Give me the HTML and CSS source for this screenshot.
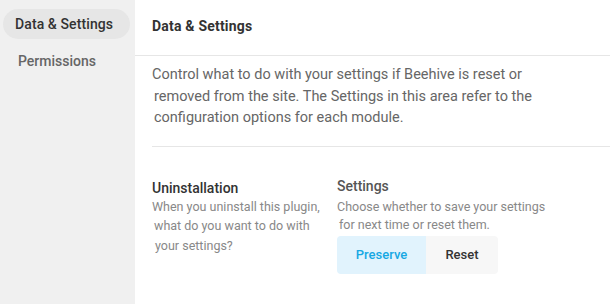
FILE: index.html
```html
<!DOCTYPE html>
<html>
<head>
<meta charset="utf-8">
<link rel="stylesheet" href="styles.css">
</head>
<body>
<div class="layout">
  <nav class="sidebar">
    <div class="nav-item active">Data &amp; Settings</div>
    <div class="nav-item">Permissions</div>
  </nav>
  <main class="content">
    <header class="box-header"><h2>Data &amp; Settings</h2></header>
    <div class="box-body">
      <p class="intro">Control what to do with your settings if Beehive is reset or<br><span class="ind">removed from the site. The Settings in this area refer to the</span><br><span class="ind">configuration options for each module.</span></p>
      <div class="row">
        <div class="col-label">
          <div class="label">Uninstallation</div>
          <p class="desc">When you uninstall this plugin,<br><span class="ind">what do you want to do with</span><br><span class="ind2">your settings?</span></p>
        </div>
        <div class="col-field">
          <div class="label">Settings</div>
          <p class="desc">Choose whether to save your settings<br><span class="ind">for next time or reset them.</span></p>
          <div class="tabs">
            <button class="tab active">Preserve</button>
            <button class="tab">Reset</button>
          </div>
        </div>
      </div>
    </div>
  </main>
</div>
</body>
</html>
```
FILE: styles.css
```css
* { box-sizing: border-box; }
html, body { margin: 0; padding: 0; }
body {
  width: 610px;
  height: 304px;
  overflow: hidden;
  font-family: Roboto, "Liberation Sans", sans-serif;
  background: #fff;
}
.layout { display: flex; height: 304px; }
.sidebar {
  width: 135px;
  flex: none;
  background: #f0f0f0;
  padding: 9px 5px 0 3px;
}
.nav-item {
  height: 30px;
  line-height: 30px;
  padding-left: 15px;
  font-size: 14px;
  font-weight: 500;
  color: #666;
  border-radius: 15px;
  margin-bottom: 7px;
}
.nav-item.active { background: #e6e6e6; color: #333; padding-left: 12px; letter-spacing: 0.1px; }
.content { flex: 1; }
.box-header {
  height: 56px;
  border-bottom: 1px solid #e6e6e6;
  padding: 0 17px;
  display: flex;
  align-items: center;
}
.box-header h2 {
  margin: 0 0 4px;
  font-size: 14px;
  font-weight: 700;
  color: #333;
  letter-spacing: 0.2px;
}
.box-body { padding: 0 0 0 17px; }
.intro {
  margin: 0;
  padding: 8px 0 17px;
  font-size: 14.5px;
  line-height: 21.5px;
  color: #666;
  border-bottom: 1px solid #e6e6e6;
}
.ind { padding-left: 2px; }
.ind2 { padding-left: 3px; }
.row { display: flex; padding-top: 32px; }
.col-label { width: 185px; flex: none; }
.col-field { flex: 1; }
.label {
  font-size: 14px;
  font-weight: 500;
  color: #333;
  line-height: 18px;
}
.col-field .label { margin-top: -2px; color: #555; }
.desc {
  margin: 0;
  font-size: 12.5px;
  line-height: 19.5px;
  color: #888;
}
.col-field .desc { line-height: 18px; margin-top: 3px; }
.tabs { display: flex; margin-top: 2px; }
.tab {
  font-family: inherit;
  border: 0;
  height: 38px;
  font-size: 13px;
  font-weight: 500;
  padding: 0;
  background: #f7f7f7;
  color: #333;
  width: 72px;
}
.tab.active {
  width: 89px;
  background: #e1f3fd;
  color: #17a8e3;
  border-radius: 4px 0 0 4px;
}
.tab:last-child { border-radius: 0 4px 4px 0; }
```
